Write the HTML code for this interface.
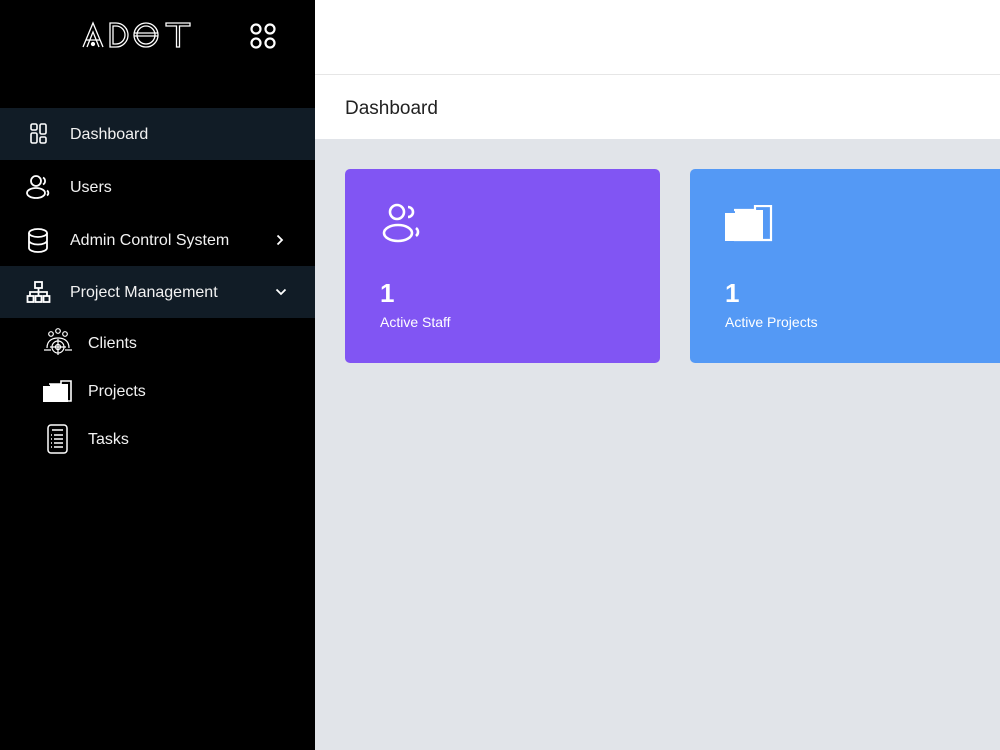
<!DOCTYPE html>
<html><head><style>
*{margin:0;padding:0;box-sizing:border-box}
body{width:1000px;height:750px;overflow:hidden;font-family:"Liberation Sans",sans-serif;background:#e1e4e9;position:relative}
.sb{position:absolute;left:0;top:0;width:315px;height:750px;background:#000}
.logo{position:absolute;left:82px;top:21px}
.item{position:absolute;left:0;width:315px;height:52px;color:#f2f2f2;font-size:16px;display:flex;align-items:center;padding-top:2px}
.item .ic{position:absolute;left:26px;top:14px}
.item span.t{position:absolute;left:70px}
.act{background:#111c26}
.sub{position:absolute;left:0;color:#f2f2f2;font-size:16px}
.sub .t{position:absolute;left:88px;white-space:nowrap}
.top{position:absolute;left:315px;top:0;width:685px;height:75px;background:#fff;border-bottom:1px solid #e6e6e6}
.hdr{position:absolute;left:315px;top:75px;width:685px;height:64px;background:#fff;font-size:19px;color:#222;padding:23px 0 0 30px}
.card{position:absolute;top:169px;height:194px;border-radius:5px;color:#fff}
.card .n{position:absolute;left:35px;top:109px;font-size:26px;font-weight:bold}
.card .l{position:absolute;left:35px;top:145px;font-size:14px}
</style></head><body>
<div class="sb">
<svg class="logo" width="112" height="28" viewBox="0 0 112 28" fill="none" stroke="#fff" stroke-width="1.3">
<path d="M1 26L11 2L21 26M5 26L11 11L17 26M4 19H18"/><circle cx="11" cy="23" r="1.5" fill="#fff"/>
<path d="M28 2V26H34A12 12 0 0 0 34 2ZM31 5V23H34A9 9 0 0 0 34 5Z"/>
<circle cx="64" cy="14" r="12"/><circle cx="64" cy="14" r="9"/><path d="M52 12H76M52 15H76"/>
<path d="M84 2H108V5H97.5V26H94.5V5H84Z"/>
</svg>
<svg style="position:absolute;left:250px;top:23px" width="26" height="26" fill="none" stroke="#fff" stroke-width="2.2"><circle cx="6" cy="6" r="4.5"/><circle cx="20" cy="6" r="4.5"/><circle cx="6" cy="20" r="4.5"/><circle cx="20" cy="20" r="4.5"/></svg>
<div class="item act" style="top:108px"><svg class="ic" width="24" height="24" fill="none" stroke="#fff" stroke-width="1.6"><rect x="5" y="2" width="6" height="6" rx="1.5"/><rect x="14" y="2" width="6" height="10" rx="1.5"/><rect x="5" y="11" width="6" height="10" rx="1.5"/><rect x="14" y="15" width="6" height="6" rx="1.5"/></svg><span class="t">Dashboard</span></div>
<div class="item" style="top:161px"><svg class="ic" width="26" height="26" fill="none" stroke="#fff" stroke-width="1.8"><circle cx="10" cy="6" r="5"/><ellipse cx="10" cy="18" rx="9" ry="5"/><path d="M17 2.5A4 4 0 0 1 17 9.5M21 15.5A3 3 0 0 1 21 20.5"/></svg><span class="t">Users</span></div>
<div class="item" style="top:214px"><svg class="ic" width="26" height="26" fill="none" stroke="#fff" stroke-width="1.8"><ellipse cx="12" cy="5" rx="9" ry="4"/><path d="M3 5V20A9 4 0 0 0 21 20V5M3 12.5A9 4 0 0 0 21 12.5"/></svg><span class="t">Admin Control System</span><svg style="position:absolute;left:276px;top:20px" width="8" height="12" fill="none" stroke="#fff" stroke-width="1.8"><path d="M1.5 1.5L6 6L1.5 10.5"/></svg></div>
<div class="item act" style="top:266px"><svg class="ic" width="26" height="26" fill="none" stroke="#fff" stroke-width="1.8"><rect x="9" y="2" width="7" height="6"/><path d="M12.5 8V12M4 16V12H21V16M12.5 12V16"/><rect x="1.5" y="16" width="6" height="6"/><rect x="9.5" y="16" width="6" height="6"/><rect x="17.5" y="16" width="6" height="6"/></svg><span class="t">Project Management</span><svg style="position:absolute;left:275px;top:22px" width="12" height="8" fill="none" stroke="#fff" stroke-width="1.8"><path d="M1.5 1.5L6 6L10.5 1.5"/></svg></div>
<div class="sub" style="top:328px"><svg style="position:absolute;left:43px;top:0" width="30" height="30" fill="none" stroke="#fff" stroke-width="1.2"><circle cx="15" cy="3" r="2.3"/><circle cx="8" cy="6" r="2.3"/><circle cx="22" cy="6" r="2.3"/><path d="M4 20C4 12 10 10 15 10C20 10 26 12 26 20M1 22H8M22 22H29"/><circle cx="15" cy="19" r="6"/><circle cx="15" cy="19" r="2.5"/><path d="M15 11V27M7 19H23"/></svg><span class="t" style="top:7px">Clients</span></div>
<div class="sub" style="top:376px"><svg style="position:absolute;left:43px;top:4px" width="30" height="22" fill="none"><path d="M6 4H18V1H28V21H6" stroke="#fff" stroke-width="1.6"/><path d="M0 6H7V4H25V22H0Z" fill="#fff"/></svg><span class="t" style="top:7px">Projects</span></div>
<div class="sub" style="top:424px"><svg style="position:absolute;left:46px;top:0" width="24" height="30" fill="none" stroke="#fff" stroke-width="1.5"><rect x="2" y="1" width="19" height="28" rx="3"/><path d="M6 6H17M5 11H6M8 11H17M5 15H6M8 15H17M5 19H6M8 19H17M5 23H6M8 23H17"/></svg><span class="t" style="top:7px">Tasks</span></div>
</div>
<div class="top"></div>
<div class="hdr">Dashboard</div>
<div class="card" style="left:345px;width:315px;background:#8155f3">
<svg style="position:absolute;left:37px;top:33px" width="42" height="42" fill="none" stroke="#fff" stroke-width="2.6"><circle cx="15" cy="10" r="7"/><ellipse cx="16" cy="31" rx="14" ry="8"/><path d="M26 5A5 5 0 0 1 26 15M34 26A5 5 0 0 1 34 34"/></svg>
<div class="n">1</div><div class="l">Active Staff</div></div>
<div class="card" style="left:690px;width:320px;background:#5499f5">
<svg style="position:absolute;left:35px;top:36px" width="50" height="38" fill="none"><path d="M9 5H30V1H46V35H9" stroke="#fff" stroke-width="2.2"/><path d="M0 8H10V5H38V36H0Z" fill="#fff"/></svg>
<div class="n">1</div><div class="l">Active Projects</div></div>
</body></html>
